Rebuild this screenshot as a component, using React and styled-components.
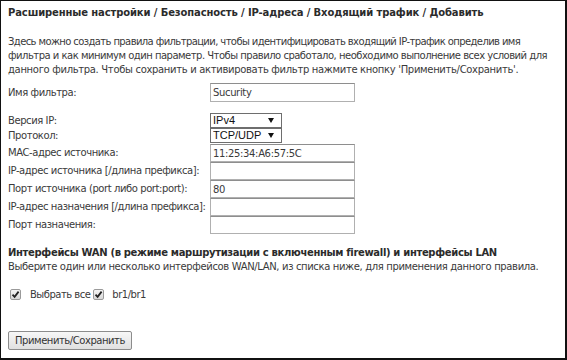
import React, { useState } from 'react';
import styled, { createGlobalStyle } from 'styled-components';

const GlobalStyle = createGlobalStyle`
	html, body {
		margin: 0;
		padding: 0;
		background: #fff;
	}
	body {
		font-family: 'DejaVu Sans', Verdana, sans-serif;
		font-size: 10px;
		color: #3a3a3a;
	}
`;

const Frame = styled.div`
	width: 567px;
	height: 360px;
	box-sizing: border-box;
	border-top: 1px solid #111;
	border-left: 1px solid #111;
	border-right: 2px solid #111;
	border-bottom: 2px solid #111;
	padding: 5px 2px 0 7px;
	overflow: hidden;
`;

const Title = styled.div`
	font-weight: bold;
	color: #2b2b2b;
	line-height: 14px;
	letter-spacing: -0.12px;
	white-space: nowrap;
`;

const Intro = styled.div`
	margin-top: 15px;
	line-height: 14px;
`;

const Line = styled.div`
	white-space: nowrap;
	letter-spacing: ${p => p.$ls}px;
`;

const Fields = styled.div`
	display: grid;
	grid-template-columns: 202px 145px;
	margin-top: 6px;
	align-items: center;
`;

const Label = styled.div`
	height: ${p => p.$h || 18}px;
	line-height: ${p => p.$h || 18}px;
	white-space: nowrap;
	letter-spacing: -0.42px;
`;

const Spacer = styled.div`
	grid-column: 1 / 3;
	height: ${p => p.$h}px;
`;

const TextInput = styled.input`
	box-sizing: border-box;
	width: 145px;
	height: ${p => p.$h || 18}px;
	margin: 0;
	padding: 0 2px;
	border: 1px solid #b0b0b0;
	border-top-color: #8e8e8e;
	font-family: 'DejaVu Sans', Verdana, sans-serif;
	font-size: 10px;
	letter-spacing: -0.35px;
	color: #3a3a3a;
	background: #fff;
	outline: none;
	position: relative;
`;

const SelectBox = styled.div`
	position: relative;
	width: 72px;
	height: 15px;
	box-sizing: border-box;
	border: 1px solid #6e6e6e;
	background: #fff;
	&::after {
		content: '';
		position: absolute;
		right: 7px;
		top: 4px;
		border-left: 3px solid transparent;
		border-right: 3px solid transparent;
		border-top: 5px solid #111;
		pointer-events: none;
	}
`;

const Select = styled.select`
	appearance: none;
	display: block;
	width: 100%;
	height: 13px;
	border: none;
	margin: 0;
	padding: 0 0 0 2px;
	background: transparent;
	font-family: 'Liberation Sans', Arial, sans-serif;
	font-size: 11px;
	line-height: 13px;
	color: #111;
	outline: none;
`;

const Heading = styled.div`
	margin-top: 12px;
	font-weight: bold;
	line-height: 14px;
	color: #2b2b2b;
	letter-spacing: -0.33px;
	white-space: nowrap;
`;

const Note = styled.div`
	line-height: 14px;
	letter-spacing: -0.36px;
	white-space: nowrap;
`;

const CheckRow = styled.div`
	display: flex;
	align-items: center;
	margin-top: 13px;
	padding-left: 2px;
	height: 14px;
`;

const CheckLabel = styled.label`
	display: flex;
	align-items: center;
	cursor: pointer;
	margin-right: ${p => p.$gap || 0}px;
`;

const Box = styled.span`
	display: inline-flex;
	align-items: center;
	justify-content: center;
	width: 11px;
	height: 11px;
	box-sizing: border-box;
	border: 1px solid #9a9a9a;
	border-radius: 2px;
	background: linear-gradient(#f4f4f4, #d8d8d8);
	margin-right: ${p => p.$mr}px;
`;

const CheckText = styled.span`
	letter-spacing: -0.5px;
`;

const Button = styled.button`
	display: block;
	margin-top: 30px;
	height: 19px;
	width: 124px;
	padding: 0;
	box-sizing: border-box;
	border: 1px solid #8c8c8c;
	border-radius: 2px;
	background: linear-gradient(#f7f7f7, #e0e0e0);
	font-family: 'DejaVu Sans', Verdana, sans-serif;
	font-size: 10px;
	color: #333;
	letter-spacing: -0.45px;
	cursor: pointer;
`;

const Check = ({ checked }) => (
	<svg width="9" height="9" viewBox="0 0 9 9" style={{ opacity: checked ? 1 : 0 }}>
		<path d="M1.5 4.6 L3.6 6.8 L7.6 1.6" fill="none" stroke="#222" strokeWidth="1.8" />
	</svg>
);

const Checkbox = ({ checked, onChange, mr }) => (
	<Box $mr={mr} onClick={onChange}>
		<Check checked={checked} />
	</Box>
);

export default function App() {
	const [all, setAll] = useState(true);
	const [br, setBr] = useState(true);

	return (
		<Frame>
			<GlobalStyle />
			<Title>Расширенные настройки / Безопасность / IP-адреса / Входящий трафик / Добавить</Title>
			<Intro>
				<Line $ls={-0.6}>Здесь можно создать правила фильтрации, чтобы идентифицировать входящий IP-трафик определив имя</Line>
				<Line $ls={-0.5}>фильтра и как минимум один параметр. Чтобы правило сработало, необходимо выполнение всех условий для</Line>
				<Line $ls={-0.32}>данного фильтра. Чтобы сохранить и активировать фильтр нажмите кнопку 'Применить/Сохранить'.</Line>
			</Intro>
			<Fields>
				<Label $h={19}>Имя фильтра:</Label>
				<TextInput $h={19} defaultValue="Sucurity" />
				<Spacer $h={11} />
				<Label $h={15}>Версия IP:</Label>
				<SelectBox>
					<Select defaultValue="IPv4">
						<option>IPv4</option>
						<option>IPv6</option>
					</Select>
				</SelectBox>
				<Label $h={15}>Протокол:</Label>
				<SelectBox>
					<Select defaultValue="TCP/UDP">
						<option>TCP/UDP</option>
						<option>TCP</option>
						<option>UDP</option>
						<option>ICMP</option>
					</Select>
				</SelectBox>
				<Spacer $h={1} />
				<Label>MAC-адрес источника:</Label>
				<TextInput defaultValue="11:25:34:A6:57:5C" />
				<Label>IP-адрес источника [/длина префикса]:</Label>
				<TextInput />
				<Label>Порт источника (port либо port:port):</Label>
				<TextInput defaultValue="80" />
				<Label>IP-адрес назначения [/длина префикса]:</Label>
				<TextInput />
				<Label>Порт назначения:</Label>
				<TextInput />
			</Fields>
			<Heading>Интерфейсы WAN (в режиме маршрутизации с включенным firewall) и интерфейсы LAN</Heading>
			<Note>Выберите один или несколько интерфейсов WAN/LAN, из списка ниже, для применения данного правила.</Note>
			<CheckRow>
				<CheckLabel $gap={3}>
					<Checkbox mr={9} checked={all} onChange={() => setAll(!all)} />
					<CheckText>Выбрать все</CheckText>
				</CheckLabel>
				<CheckLabel>
					<Checkbox mr={8} checked={br} onChange={() => setBr(!br)} />
					<CheckText>br1/br1</CheckText>
				</CheckLabel>
			</CheckRow>
			<Button>Применить/Сохранить</Button>
		</Frame>
	);
}
